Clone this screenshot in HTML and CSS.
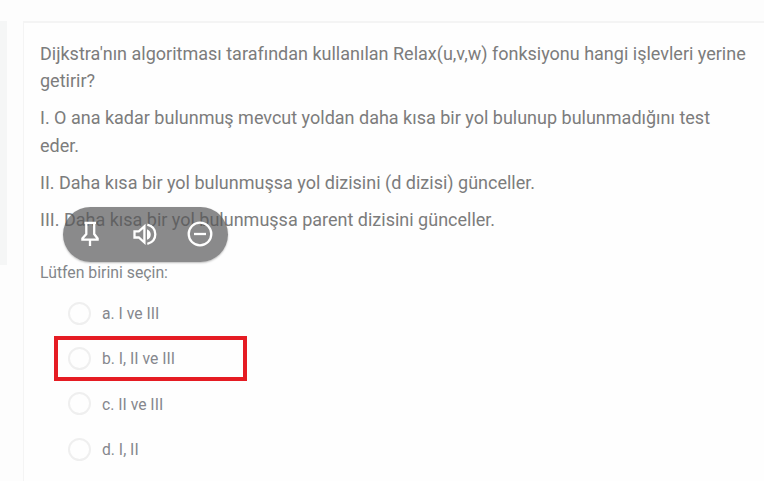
FILE: index.html
```html
<!DOCTYPE html>
<html lang="tr">
<head>
<meta charset="utf-8">
<title>Soru</title>
<link rel="stylesheet" href="styles.css">
</head>
<body>
<div class="page">
  <aside class="side"></aside>
  <main class="card">
    <div class="question">
      <p><span>Dijkstra'nın algoritması tarafından kullanılan Relax(u,v,w) fonksiyonu hangi işlevleri yerine</span><br>getirir?</p>
      <p><span>I. O ana kadar bulunmuş mevcut yoldan daha kısa bir yol bulunup bulunmadığını test</span><br>eder.</p>
      <p><span>II. Daha kısa bir yol bulunmuşsa yol dizisini (d dizisi) günceller.</span></p>
      <p><span>III. Daha kısa bir yol bulunmuşsa parent dizisini günceller.</span></p>
    </div>
    <div class="prompt"><span>Lütfen birini seçin:</span></div>
    <div class="options">
      <label class="option"><i class="radio"></i><span>a. I ve III</span></label>
      <label class="option marked"><i class="radio"></i><span>b. I, II ve III</span></label>
      <label class="option"><i class="radio"></i><span>c. II ve III</span></label>
      <label class="option"><i class="radio"></i><span>d. I, II</span></label>
    </div>
  </main>
  <div class="toolbar">
    <svg width="165" height="55" viewBox="0 0 165 55" fill="none" stroke="#fff" stroke-width="2.3">
      <path d="M21.500 15.800h11.500M23.300 16v11L19.400 31.500v1.100h15.200v-1.100L31.200 27V16M27 33v6"/>
      <path d="M71.500 24.300h4.300l5.600-5v16.200l-5.600-5h-4.300z"/>
      <path d="M84.300 17.700c5 1.300 8 5 8 9.600s-3 8.300-8 9.600"/>
      <path d="M84 22.200c5 1.800 5 8.800 0 10.500z" fill="#fff" stroke="none"/>
      <circle cx="137" cy="27" r="11.300"/>
      <path d="M131 27h12"/>
    </svg>
  </div>
</div>
</body>
</html>
```
FILE: styles.css
```css
* { box-sizing: border-box; }
body { margin: 0; background: #fdfdfd; font-family: Roboto, "Liberation Sans", sans-serif; color: #7c7c7c; overflow: hidden; }
.page { position: relative; display: flex; align-items: flex-start; gap: 16px; height: 481px; padding-top: 21px; overflow: hidden; }
.side { flex: none; width: 7px; height: 244px; background: #f5f6f6; }
.card { flex: 1; min-width: 0; height: 470px; padding: 16.6px 0 0 16px; background: #fefefe; border: solid #f4f4f4; border-width: 2px 0 0 1px; white-space: nowrap; }
.question { font-size: 18px; line-height: 27.8px; }
.question p { margin: 0 0 9px; }
.prompt { margin-top: 26.4px; height: 26px; line-height: 26px; font-size: 15.8px; color: #83868a; }
.options { margin: 4.600px 0 0 14px; width: 193px; font-size: 15.7px; color: #85878d; }
.option { display: flex; align-items: center; height: 45.4px; padding-left: 14px; gap: 11px; }
.option span { position: relative; top: .5px; }
.marked { border: 4px solid #e51c23; padding-left: 10px; }
.radio { flex: none; width: 23px; height: 23px; border: 2px solid #efefef; border-radius: 50%; }
.toolbar { position: absolute; left: 63px; top: 207px; width: 165px; height: 55px; border-radius: 28px; background: rgba(85, 86, 87, .69); box-shadow: 0 1px 2px rgba(0, 0, 0, .25); }
.toolbar svg { display: block; }
```
